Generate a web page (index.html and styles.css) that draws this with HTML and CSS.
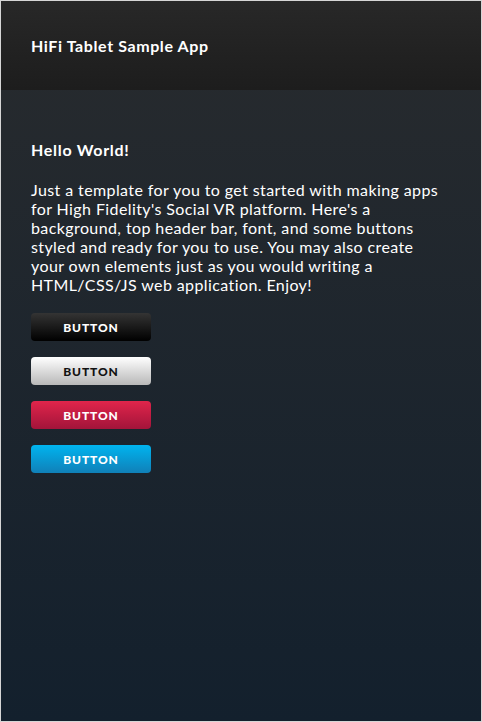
FILE: index.html
```html
<!DOCTYPE html>
<html>
<head>
<meta charset="utf-8">
<link rel="stylesheet" href="styles.css">
</head>
<body>
<div class="frame">
  <header class="top-bar">
    <div class="title">HiFi Tablet Sample App</div>
  </header>
  <main class="content">
    <h1 class="heading">Hello World!</h1>
    <p class="intro">Just a template for you to get started with making apps for High Fidelity's Social VR platform. Here's a background, top header bar, font, and some buttons styled and ready for you to use. You may also create your own elements just as you would writing a HTML/CSS/JS web application. Enjoy!</p>
    <div class="buttons">
      <button class="btn btn-black">BUTTON</button>
      <button class="btn btn-white">BUTTON</button>
      <button class="btn btn-red">BUTTON</button>
      <button class="btn btn-blue">BUTTON</button>
    </div>
  </main>
</div>
</body>
</html>
```
FILE: styles.css
```css
html, body {
  margin: 0;
  padding: 0;
  height: 100%;
}
body {
  background: #d8d8d8;
  font-family: "Lato", "Open Sans", sans-serif;
}
.frame {
  box-sizing: border-box;
  height: 722px;
  border: 1px solid #d6d6d6;
  display: flex;
  flex-direction: column;
  background: linear-gradient(to bottom, #282b2e 0%, #13202d 100%);
}
.top-bar {
  height: 89px;
  flex: none;
  display: flex;
  align-items: center;
  padding-left: 30px;
  background: linear-gradient(to bottom, #282828 0%, #1d1d1d 100%);
}
.title {
  color: #fff;
  font-weight: 700;
  font-size: 16px;
  letter-spacing: 0.6px;
}
.content {
  padding: 50px 38px 0 30px;
  color: #fff;
}
.heading {
  margin: 0;
  font-size: 16px;
  line-height: 19px;
  font-weight: 700;
  letter-spacing: 0.7px;
}
.intro {
  margin: 21px 0 0 0;
  font-size: 16px;
  line-height: 19px;
  font-weight: 400;
  letter-spacing: 0.4px;
}
.buttons {
  display: flex;
  flex-direction: column;
  align-items: flex-start;
  gap: 16px;
  margin-top: 19px;
}
.btn {
  width: 120px;
  height: 28px;
  border: none;
  border-radius: 4px;
  font-family: "Lato", sans-serif;
  font-weight: 900;
  font-size: 12px;
  letter-spacing: 0.9px;
  padding: 0;
  color: #fff;
}
.btn-black {
  background: linear-gradient(to bottom, #343434 0%, #000000 100%);
}
.btn-white {
  background: linear-gradient(to bottom, #ffffff 0%, #b8b8b8 100%);
  color: #121212;
}
.btn-red {
  background: linear-gradient(to bottom, #e0254b 0%, #a3143a 100%);
}
.btn-blue {
  background: linear-gradient(to bottom, #00b4ef 0%, #1080b8 100%);
}
```
